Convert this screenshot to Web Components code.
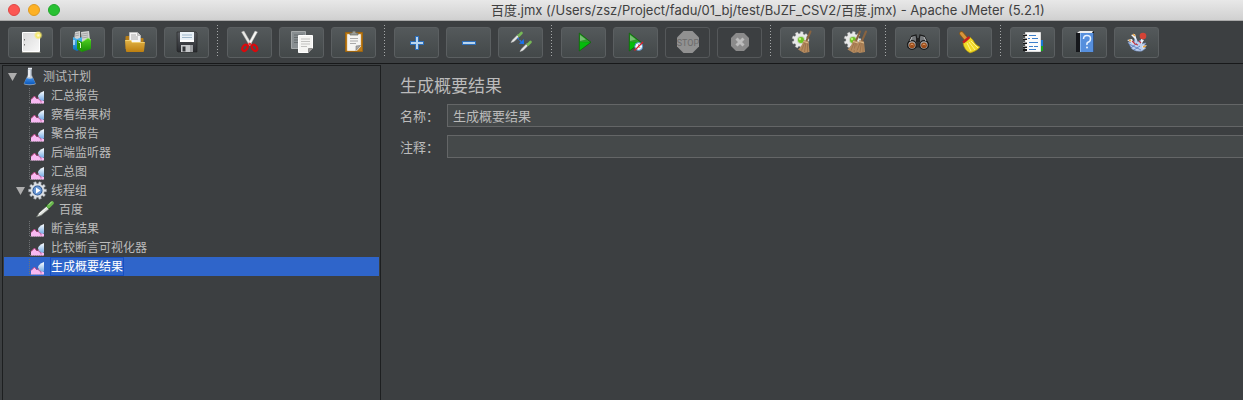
<!DOCTYPE html>
<html lang="zh-CN">
<head>
<meta charset="utf-8">
<title>Apache JMeter</title>
<style>
html,body{margin:0;background:#3c3f41}
body{font-family:Inter,"Noto Sans CJK SC",sans-serif;color:#bbb}
</style>
</head>
<body>
<jm-window>
  <jm-titlebar slot="title">百度.jmx (/Users/zsz/Project/fadu/01_bj/test/BJZF_CSV2/百度.jmx) - Apache JMeter (5.2.1)</jm-titlebar>
  <jm-toolbar slot="toolbar">
    <jm-tool icon="new" label="新建"></jm-tool>
    <jm-tool icon="templates" label="模板"></jm-tool>
    <jm-tool icon="open" label="打开"></jm-tool>
    <jm-tool icon="save" label="保存"></jm-tool>
    <jm-separator></jm-separator>
    <jm-tool icon="cut" label="剪切"></jm-tool>
    <jm-tool icon="copy" label="复制"></jm-tool>
    <jm-tool icon="paste" label="粘贴"></jm-tool>
    <jm-separator></jm-separator>
    <jm-tool icon="plus" label="展开"></jm-tool>
    <jm-tool icon="minus" label="折叠"></jm-tool>
    <jm-tool icon="toggle" label="切换"></jm-tool>
    <jm-separator></jm-separator>
    <jm-tool icon="run" label="启动"></jm-tool>
    <jm-tool icon="runnow" label="不停顿开始"></jm-tool>
    <jm-tool icon="stop" label="停止" disabled></jm-tool>
    <jm-tool icon="shutdown" label="关闭" disabled></jm-tool>
    <jm-separator></jm-separator>
    <jm-tool icon="clear" label="清除"></jm-tool>
    <jm-tool icon="clearall" label="清除全部"></jm-tool>
    <jm-separator></jm-separator>
    <jm-tool icon="search" label="查找"></jm-tool>
    <jm-tool icon="reset" label="重置搜索"></jm-tool>
    <jm-separator></jm-separator>
    <jm-tool icon="functions" label="函数助手"></jm-tool>
    <jm-tool icon="help" label="帮助"></jm-tool>
    <jm-tool icon="plugins" label="插件"></jm-tool>
  </jm-toolbar>
  <jm-tree slot="tree">
    <jm-node icon="flask" level="0" open>测试计划</jm-node>
    <jm-node icon="listener" level="1">汇总报告</jm-node>
    <jm-node icon="listener" level="1">察看结果树</jm-node>
    <jm-node icon="listener" level="1">聚合报告</jm-node>
    <jm-node icon="listener" level="1">后端监听器</jm-node>
    <jm-node icon="listener" level="1">汇总图</jm-node>
    <jm-node icon="gear" level="1" open>线程组</jm-node>
    <jm-node icon="pipette" level="2">百度</jm-node>
    <jm-node icon="listener" level="1">断言结果</jm-node>
    <jm-node icon="listener" level="1">比较断言可视化器</jm-node>
    <jm-node icon="listener" level="1" selected>生成概要结果</jm-node>
  </jm-tree>
  <jm-panel>
    <span slot="heading">生成概要结果</span>
    <jm-field value="生成概要结果">名称：</jm-field>
    <jm-field value="">注释：</jm-field>
  </jm-panel>
</jm-window>

<script>
const gearPath = (cx, cy, r, n) => {
  let d = '';
  for (let i = 0; i < n; i++) {
    [[-.5, .76], [-.3, .78], [-.22, 1], [.22, 1], [.3, .78]].forEach(([o, k]) => {
      const a = (i + o) * 2 * Math.PI / n;
      d += (d ? 'L' : 'M') + (cx + r * k * Math.cos(a)).toFixed(2) + ' ' + (cy + r * k * Math.sin(a)).toFixed(2);
    });
  }
  return d + 'Z';
};
const grad = (id, a, b, dir = 'x2="0" y2="1"') =>
  `<linearGradient id="${id}" ${dir}><stop stop-color="${a}"/><stop offset="1" stop-color="${b}"/></linearGradient>`;
const broom = dx => `<g transform="translate(${dx})"><path d="M30.500 4.500 26 15" stroke="#8a6440" stroke-width="2" stroke-linecap="round"/>
  <path d="M24 13 28.500 14.500 29.500 25 24 26 18 22.500C21 20 22.500 17 24 13Z" fill="#b48a5e"/>
  <path d="M25 15 21.500 23.500M26 15 24.500 25M27.500 16 27.500 25" stroke="#8d6540" stroke-width=".6"/>
  <path d="m23.500 14.500 5 1.500" stroke="#e0bd8c"/></g>`;
const clearGear = `<path d="${gearPath(20.500, 13, 8.500, 9)}" fill="#e9e9e9" stroke="#bbb" stroke-width=".4"/><circle cx="21" cy="13" r="4" fill="#c9d6bd"/><circle cx="21" cy="13" r="3" fill="#6fc224"/><circle cx="20" cy="12" r="1.200" fill="#b9ef77"/>`;
const smallPipette = (x, y) => `<g transform="translate(${x} ${y})"><path d="M0 11 1.500 8.500 7 3 8.500 4.500 3 10Z" fill="#e8e8e8" stroke="#c2c5c2" stroke-width=".5"/><path d="m6 3 3 3" stroke="#3d6a2c"/><path d="M8 4 10.500 1.500" stroke="#77b857" stroke-width="2.600" stroke-linecap="round"/></g>`;

const TOOL_ICONS = {
  new: `<defs>${grad('g', '#d9d9d9', '#f8f8f8', 'x2="1" y2="1"')}<radialGradient id="s"><stop stop-color="#fffde0"/><stop offset=".5" stop-color="#f5e86a"/><stop offset="1" stop-color="#f5e86a" stop-opacity="0"/></radialGradient></defs>
    <path d="M14.500 5.500h17v19h-17z" fill="url(#g)" stroke="#fff"/><path d="M14 25.500h18.500" stroke="#8b8c85"/><path d="M16 12h1v1.500h-1zM16 17h1v1.500h-1z" fill="#777"/><circle cx="30.300" cy="8.300" r="4.500" fill="url(#s)"/>`,
  templates: `<defs>${grad('g', '#52d322', '#168d05')}${grad('b', '#55b9ef', '#0872bd')}</defs>
    <path d="m15 5 5-1v9l-6 1zM21 5l8-1 1 9-8 2z" fill="#d2d2d2"/><path d="m15 7 4-1M15 9l4-1M22 7l6-1M22 9l6-1M22 11l6-1" stroke="#999" stroke-width=".8"/>
    <path d="m13 10 4 2 5-2v11l-5 3-4-2z" fill="url(#b)"/><path d="M14 13v5" stroke="#d9f1ff" stroke-width="1.300"/>
    <path d="m17 13 5 2v10l-5-3z" fill="#239a08"/><path d="m22 15 6-4 3 2v9l-9 3z" fill="url(#g)"/><path d="m18.500 15 2 1v5" stroke="#d9ffc8" fill="none"/><path d="m22 15 6-4 3 2" stroke="#9cf36b" stroke-width=".7" fill="none"/>`,
  open: `<defs>${grad('g', '#e2b548', '#bd7f10')}</defs><path d="M13.500 10q0-1 1-1h5l2 2h9q1 0 1 1v10h-18z" fill="#b57d18"/>
    <path d="M17.500 5.500h8l3 3v8h-11z" fill="#f6f6f6" stroke="#ccc" stroke-width=".6"/><path d="M25.500 5.500v3h3" fill="#ccc" stroke="#999" stroke-width=".5"/><path d="M19 8h5M19 10h7M19 12h7" stroke="#999" stroke-width=".8"/>
    <path d="M13 13h6l1 2h13l-1 9q0 1-1 1H15q-1 0-1-1z" fill="url(#g)"/><path d="M13.500 13.500H19l1 2h12.500" stroke="#f8dd8a" stroke-width=".7" fill="none"/>`,
  save: `<defs>${grad('g', '#56595e', '#282a2e')}</defs><path d="M13 5h19l1 1v19H14l-1-1z" fill="url(#g)" stroke="#222" stroke-width=".6"/>
    <path d="M16 5h14v10H16z" fill="#e9f1f7"/><path d="M18 8h10M18 10.500h10" stroke="#9db6ca"/><path d="M16 13h14v2H16z" fill="#fff"/><path d="M17 18h12v7H17z" fill="#c6c8ca"/><path d="M18.500 19.500h3v5h-3z" fill="#34373a"/><path d="M26 18h3v7h-3z" fill="#9a9c9f"/>`,
  cut: `<path d="m14.500 5 2.500-1 7.500 13-2 1.500z" fill="#e9e9e5" stroke="#aaa" stroke-width=".4"/><path d="m30.500 5-2.500-1-7 13 2 1.500z" fill="#f8f8f5" stroke="#aaa" stroke-width=".4"/>
    <g fill="none" stroke="#d9090c" stroke-width="2.200"><ellipse cx="18" cy="20.800" rx="2.300" ry="3.400" transform="rotate(35 18 20.800)"/><ellipse cx="27.500" cy="20.800" rx="2.300" ry="3.400" transform="rotate(-35 27.500 20.800)"/></g><circle cx="22.700" cy="17" r="1.500" fill="#ec3333"/>`,
  copy: `<path d="M12.500 4.500h14v17h-14z" fill="#888e91" stroke="#a5a9aa"/><path d="M15 8h9M15 10.500h9M15 13h5M15 15.500h5" stroke="#656b6d"/>
    <path d="M19.500 8.500h14v13l-4 4h-10z" fill="#f4f4f2" stroke="#fff"/><path d="M22 12h9M22 14.500h9M22 17h9M22 19.500h6" stroke="#c2c2c0"/><path d="M33.500 21.500h-4v4z" fill="#999" stroke="#666" stroke-width=".6"/>`,
  paste: `<path d="M14.500 5.500h17v19h-17z" fill="#bc7b18" stroke="#9d6510"/><path d="M16.500 7.500h13v12l-3.500 4h-9.500z" fill="#f4f4f2" stroke="#fff" stroke-width=".6"/><path d="M19 11.500h8M19 14h8M19 16.500h6" stroke="#aaa"/><path d="M29.500 18.500 25 19v4.500z" fill="#aaa" stroke="#777" stroke-width=".6"/><path d="M19 8V6h2l1-2h2l1 2h2v2z" fill="#9b9d98" stroke="#666860" stroke-width=".7"/>`,
  plus: `<path d="M21 9h4v5h5v4h-5v5h-4v-5h-5v-4h5z" fill="#2c6db8"/><path d="M22 10h2v5h5v2h-5v5h-2v-5h-5v-2h5z" fill="#b9d5ef"/>`,
  minus: `<path d="M16 14h14v4H16z" fill="#2c6db8"/><path d="M17 15h12v2H17z" fill="#b9d5ef"/>`,
  toggle: smallPipette(13, 4.500) + smallPipette(22, 13.500) + `<path d="m19.500 11 4 4" stroke="#2879e8" stroke-width="1.300" stroke-dasharray="2 1"/><path d="m25.800 12 .2 5-5-.3z" fill="#1973f2"/>`,
  run: `<path d="M18.300 6 30 15.300 18.300 24z" fill="#16840f"/><path d="M18.500 6.500v8.800h11z" fill="#2b9e28"/><path d="M18.300 24V15l11 .500z" fill="#05bb0c"/><path d="m18.300 6 11.700 9.300L18.300 24z" fill="none" stroke="#12650e" stroke-width=".8"/><path d="M19 8v6l6-1.500z" fill="#75bd72"/>`,
  runnow: `<path d="M16.300 6 28 15.300 16.300 24z" fill="#16840f"/><path d="M16.500 6.500v8.800h11z" fill="#2b9e28"/><path d="M16.300 24V15l11 .500z" fill="#05bb0c"/><path d="m16.300 6 11.700 9.300L16.300 24z" fill="none" stroke="#12650e" stroke-width=".8"/><path d="M17 8v6l6-1.500z" fill="#75bd72"/>
    <circle cx="25.700" cy="19.500" r="3.900" fill="#f5faff" stroke="#4a8cc9"/><path d="M25.500 17v3l2 1" stroke="#777" fill="none" stroke-width=".6"/><path d="m21.500 23.500 8.500-8.500" stroke="#dc1f26" stroke-width="1.300"/>`,
  stop: `<path d="M18.500 4h9l6.500 6.500v9L27.500 26h-9L12 19.500v-9z" fill="#919191"/><text x="23" y="19" text-anchor="middle" font-family="Roboto,sans-serif" font-size="9" fill="#6c6c6c">STOP</text>`,
  shutdown: `<path d="M19 6h8l5 5v8l-5 5h-8l-5-5v-8z" fill="#8b8b8b"/><path d="m19.500 11.500 7 7m0-7-7 7" stroke="#bcbcbc" stroke-width="3"/>`,
  clear: clearGear + broom(0),
  clearall: clearGear + broom(-2.500) + broom(3.500),
  search: `<g stroke="#191919" stroke-width="1.200"><path d="m17 9 4-1 1 5v7h-9l-.5-3zM29 9l-4-1-1 5v7h9l.5-3z" fill="#74777a"/><circle cx="17" cy="18" r="4.300" fill="#aaa"/><circle cx="29" cy="18" r="4.300" fill="#aaa"/></g><path d="M21 11h4v4h-4z" fill="#222"/><circle cx="17" cy="18.300" r="2.900" fill="#9b4c19"/><circle cx="29" cy="18.300" r="2.900" fill="#9b4c19"/><path d="M15.500 18q1.500-2 3 0M27.500 18q1.500-2 3 0" stroke="#e5a26d" fill="none"/><path d="m17 10-2 4M29 10l2 4" stroke="#c4c6c8"/>`,
  reset: `<path d="m14.500 6.500 5 6" stroke="#8f5a16" stroke-width="4.600" stroke-linecap="round"/><path d="m14.500 6.500 5 6" stroke="#d7953c" stroke-width="3" stroke-linecap="round"/><path d="M16 16q4-1 7-6l3 3q2 5 7 7-3 4-10 6-6-3-7-10z" fill="#f1d926" stroke="#aa8f0a" stroke-width=".6"/><path d="m20 16 4 8M22 15l6 8M24 14l7 7" stroke="#fff28b"/><path d="m16 15.500 6.500-5.500" stroke="#c91f1c" stroke-width="2.300"/>`,
  functions: `<path d="M30 13h3v6h-3z" fill="#1976d2"/><path d="M30 19h3v5h-3z" fill="#15a71d"/><path d="M15.500 5.500h15v19h-15z" fill="#fbfbfb" stroke="#ddd"/><path d="M19 8.500h7M18 11.500h2m2 0h6M19 15.500h9M19 19.500h4m1 0h4M19 22.500h7" stroke="#3d7fca"/><path d="M13 8h4M13 12h4M13 16h4M13 20h4M13 23h4" stroke="#171717" stroke-width="2"/><path d="M13 7.500h4M13 11.500h4M13 15.500h4M13 19.500h4" stroke="#ccc" stroke-width=".7"/>`,
  help: `<path d="m14 6 3-1.500h15V25H14z" fill="#15171b"/><path d="m16 5 2-1h13l-1 2H15z" fill="#eee"/><path d="M18 6h13.500v19H18z" fill="#568fdd"/><path d="M18 6h1v19h-1z" fill="#8cb9f2"/><path d="M21.500 12q0-3.500 3.500-3.500t3.500 3-2 3.500-1.500 3" fill="none" stroke="#e9f3ff" stroke-width="1.500"/><circle cx="25" cy="20.500" r="1" fill="#e9f3ff"/>`,
  plugins: `<path d="m14 15 4 7q4 3 10 2l4-3-3-1 3-4-5 1 1-5-4 3-3-5-1 6z" fill="#bdd0ee" stroke="#7590c4" stroke-width=".6"/><path d="m17 8 4-1 2 7zM13 13l5-1 3 6zM27 12l3 1-3 5zM28 19l5-1-4 4z" fill="#eef3fc"/><path d="m15 17 12 6M17 21l6-5M20 23l6-4" stroke="#4f73bd" stroke-width=".8"/><path d="m18 14 3 3 3 1M25 14l2 2" stroke="#c83844" stroke-width="1.200" fill="none"/><path d="m19 7 2 2M15 13l2 1M29 20l3-1" stroke="#e7a241" stroke-width="1.500"/><circle cx="29" cy="9" r="3.300" fill="#d44336"/>`
};

const NODE_ICONS = {
  flask: `<defs>${grad('g', '#408ee8', '#0956b8')}</defs><path d="M8 2h3.500v6l4 9q-6 2-11.500 0l4-9z" fill="#c4cdd8" stroke="#9aa4b0" stroke-width=".5"/><path d="m6.500 11-2.500 5.500q5.500 2 11.500 0L13 11q-3 1.500-6.500 0z" fill="url(#g)"/><path d="M9 3v7" stroke="#fff" stroke-width="1.300"/><path d="M8 1.500h4" stroke="#ebeff5" stroke-width="1.500"/>`,
  listener: `<defs>${grad('g', '#ffffff', '#79aee6')}</defs><path d="M1.500 2v15.500H16" stroke="#707375" stroke-dasharray="1 1" fill="none"/><path d="M3 17.500v-4l3.500-3.500 2.500 3 2-1 5 3v2.500z" fill="#f8b9f2"/><path d="m3 13.500 3.500-3.500 2.500 3" stroke="#b6407e" fill="none"/><path d="M16 5v9.500h-3.500q-2.500-1-2.500-4T16 5z" fill="url(#g)"/><path d="M10 11q0 3 3 3.500v2" stroke="#b6407e" stroke-width=".7" fill="none"/>`,
  gear: `<path d="${gearPath(9.500, 9.500, 9, 10)}" fill="#dce0e5" stroke="#9a9fa5" stroke-width=".5"/><circle cx="9.500" cy="9.500" r="5" fill="#254d87"/><circle cx="9.500" cy="9.500" r="4.200" fill="#6795d2"/><path d="m8 6.500 4.500 3L8 12.500z" fill="#fff"/>`,
  pipette: `<path d="m0.500 17 2.500-4 7.500-6.500 2.500 2.500-8 6.500z" fill="#dfe2df" stroke="#6a716a" stroke-width=".7"/><path d="m3 14 7.500-6.500" stroke="#fff"/><path d="m9.500 4.500 4.500 4.500" stroke="#234a20" stroke-width="1.600"/><path d="m12.500 6.500 3.500-3.500" stroke="#69b74d" stroke-width="3.800" stroke-linecap="round"/><path d="m13 4.500 2.500-2.500" stroke="#b8e6a3" stroke-linecap="round"/>`
};

const define = (name, render) => customElements.define(name, class extends HTMLElement {
  constructor() {
    super();
    this.attachShadow({ mode: 'open' });
  }
  connectedCallback() {
    const t = document.createElement('template');
    t.innerHTML = render(this);
    this.shadowRoot.replaceChildren(t.content.cloneNode(true));
  }
});

define('jm-window', () => `<style>
  :host{display:flex;flex-direction:column;min-height:100vh}
  main{display:grid;grid-template-columns:379px minmax(0,1fr);flex:1;padding:1px 0 0 2px}
  </style><slot name="title"></slot><slot name="toolbar"></slot><main><slot name="tree"></slot><slot></slot></main>`);

define('jm-titlebar', () => `<style>
  :host{display:flex;align-items:center;box-sizing:border-box;height:21px;padding-left:8px;background:linear-gradient(#e8e8e8,#d0d0d0);border-bottom:1px solid #a9a9a9;color:#404040;font-size:13px;line-height:20px}
  i{box-sizing:border-box;width:12px;height:12px;border-radius:50%;margin-right:8px;flex:none;background:#fc5753;border:1px solid #df4744}
  i:nth-of-type(2){background:#fdb124;border-color:#de9a22}i:nth-of-type(3){background:#28c132;border-color:#22a62b}
  span{margin-left:423px;white-space:nowrap}
  </style><i></i><i></i><i></i><span><slot></slot></span>`);

define('jm-toolbar', () => `<style>
  :host{display:flex;align-items:center;gap:7px;padding:6px 8px 5px;border-bottom:1px solid #18191a}
  </style><slot></slot>`);

define('jm-separator', () => `<style>
  :host{display:block;width:4px;height:31px;margin-top:-4px}
  div{width:1px;height:31px;margin-left:1px;background:repeating-linear-gradient(#a6a8a9 0 1px,transparent 1px 3px)}
  </style><div></div>`);

define('jm-tool', el => `<style>
  :host{display:block;flex:none}
  button{display:block;box-sizing:border-box;width:45px;height:31px;padding:0;border:1px solid #5b5f61;border-radius:3px;background:linear-gradient(#54595b,#434849)}
  button:disabled{background:none;border-color:#55585a}
  svg{display:block}
  </style><button type="button" aria-label="${el.getAttribute('label')}" ${el.hasAttribute('disabled') ? 'disabled' : ''}>
  <svg width="43" height="29" viewBox="1 1 43 29" fill="none">${TOOL_ICONS[el.getAttribute('icon')]}</svg></button>`);

define('jm-tree', () => `<style>
  :host{display:block;border:1px solid #1d1f20;border-bottom:0;padding:1px 1px 0}
  </style><div role="tree"><slot></slot></div>`);

define('jm-node', el => `<style>
  :host{display:flex;align-items:center;height:19px;padding-left:${el.getAttribute('level') * 8}px;font-size:12px;line-height:19px}
  :host([selected]){background:#2f65ca;color:#fff}
  .arrow{width:16px;flex:none}.arrow svg{display:block;margin-left:4px}
  .icon{flex:none}
  span{margin-left:2px;padding:0 1px;white-space:nowrap}
  :host([selected]) span{box-shadow:0 0 0 1px #164fc4 inset}
  </style><div class="arrow">${el.hasAttribute('open') ? '<svg width="9" height="9" viewBox="0 0 9 9"><path d="M0 1h9L4.500 9z" fill="#adadad"/></svg>' : ''}</div>
  <svg class="icon" width="20" height="19" viewBox="0 0 20 19" fill="none">${NODE_ICONS[el.getAttribute('icon')]}</svg>
  <span role="treeitem"><slot></slot></span>`);

define('jm-panel', () => `<style>
  :host{display:flex;flex-direction:column;gap:8px;padding:9px 0 0 19px}
  h1{margin:0;padding-top:2px;font-size:17px;font-weight:400;line-height:20px}
  </style><h1><slot name="heading"></slot></h1><slot></slot>`);

define('jm-field', el => `<style>
  :host{display:flex;align-items:center;font:13px "Noto Sans CJK SC",sans-serif}
  label{width:47px;flex:none;line-height:23px;white-space:nowrap}
  input{box-sizing:border-box;flex:1;min-width:0;height:23px;margin:0;padding:0 5px 1px;border:1px solid #646667;border-right:0;background:#45494a;color:#bbb;font:inherit;outline:0}
  </style><label for="f"><slot></slot></label><input id="f" type="text" value="${el.getAttribute('value')}">`);
</script>
</body>
</html>
